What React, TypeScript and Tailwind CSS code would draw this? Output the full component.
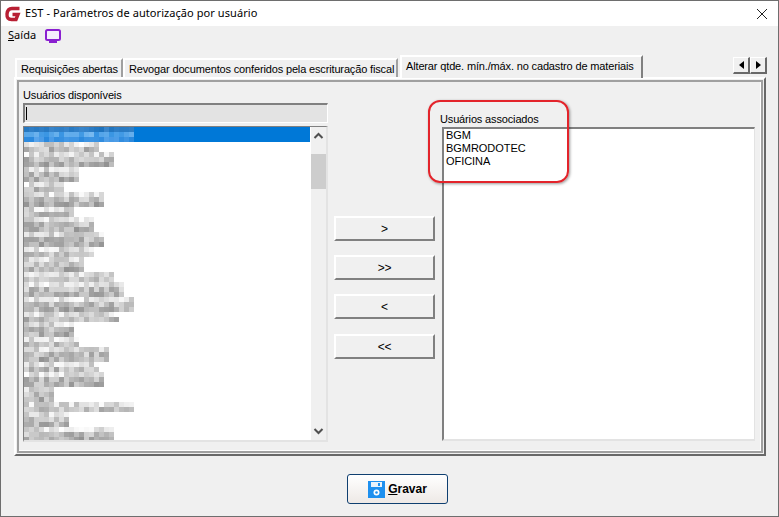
import React from "react";

const seq: [number, number][] = [
  [297,2],[342,3],[237,3],[192,2],[312,3],[222,2],[282,3],[312,3],[282,2],[252,3],[342,2],[372,3],[402,3],[357,2],[222,3],[237,2],[327,3],[297,2],[312,3],[162,3],[402,2],[207,3],[342,3],
];

function rnd(seed: number) {
  const x = Math.sin(seed * 127.1 + 3.7) * 43758.5453;
  return x - Math.floor(x);
}

function Mosaic() {
  const rects: React.ReactElement[] = [];
  let y = 15;
  let n = 0;
  seq.forEach(([w, rows], ri) => {
    for (let r = 0; r < rows; r++) {
      const cells = Math.round((w - 72) / 15);
      const base = r === 0 ? 222 : r === 1 ? 190 : 178;
      for (let c = 0; c < cells; c++) {
        n++;
        const g = Math.min(255, Math.round(base + (rnd(n + ri) - 0.5) * 66));
        rects.push(<rect key={n} x={c * 5} y={y} width={5} height={5} fill={`rgb(${g},${g},${g})`} />);
      }
      y += 5;
    }
  });
  for (let r = 0; r < 3; r++) {
    for (let c = 0; c < 22; c++) {
      n++;
      const t = rnd(n);
      const fill = r === 0 ? `rgb(${30 + t * 30},${115 + t * 20},${190 + t * 15})` : r === 1 ? `rgb(${50 + t * 70},${145 + t * 40},${225 + t * 15})` : `rgb(${40 + t * 50},${135 + t * 30},${220 + t * 15})`;
      rects.push(<rect key={n} x={c * 5} y={r * 5} width={5} height={5} fill={fill} />);
    }
  }
  return (
    <svg width="287" height="314" className="block">
      <rect x="0" y="0" width="287" height="15" fill="#0078d7" />
      {rects}
    </svg>
  );
}

function RaisedButton({ label, className }: { label: string; className?: string }) {
  return (
    <div className={"w-[101px] h-[25px] flex items-center justify-center border-t-2 border-l-2 border-t-white border-l-white border-r-2 border-b-2 border-r-[#808080] border-b-[#808080] bg-[#f0f0f0] text-[12px] text-black " + (className ?? "")}>
      {label}
    </div>
  );
}

function Tab({ label, active, w }: { label: string; active?: boolean; w: number }) {
  return (
    <div
      style={{ width: w }}
      className={
        active
          ? "relative z-10 bg-[#f0f0f0] h-[23px] -mt-[1px] border-t-2 border-l-2 border-t-white border-l-white border-r-2 border-r-[#808080] flex items-start pl-[4px] pt-[1px] whitespace-nowrap"
          : "h-[19px] mt-[2px] border-t-2 border-l-2 border-t-white border-l-white border-r-2 border-r-[#a0a0a0] flex items-start pl-[4px] pt-[1px] whitespace-nowrap"
      }
    >
      {label}
    </div>
  );
}

export default function App() {
  return (
    <div className="relative w-[779px] h-[517px] flex flex-col border border-[#6e6e6e] bg-[#f0f0f0] text-black overflow-hidden text-[11px] tracking-[-0.15px] font-['Liberation_Sans',sans-serif]">
      <div className="h-[25px] bg-white flex items-center pl-[3px] pr-[10px] shrink-0">
        <svg width="18" height="18" viewBox="0 0 18 18" className="shrink-0">
          <path d="M15.5 3.5H8Q3.5 3.5 3 9Q2.6 14.5 7.5 14.5H12L14 9.5H8.5" stroke="#b81f33" strokeWidth="3.4" fill="none" />
        </svg>
        <span className="ml-[3px] text-[11px] tracking-[0.07px] font-['Noto_Sans',sans-serif]">EST - Parâmetros de autorização por usuário</span>
        <svg width="12" height="12" viewBox="0 0 12 12" className="ml-auto">
          <path d="M1 1l10 10M11 1L1 11" stroke="#222" strokeWidth="1" fill="none" />
        </svg>
      </div>
      <div className="h-[20px] flex items-center pl-[7px] pb-[2px] shrink-0 tracking-[0.05px] font-['Noto_Sans',sans-serif]">
        <span><span className="underline">S</span>aída</span>
        <svg width="16" height="14" viewBox="0 0 16 14" className="ml-[9px] mt-[2px]">
          <rect x="1" y="1" width="14" height="10" rx="1.5" fill="#f4eefc" stroke="#8a1fd0" strokeWidth="2" />
          <rect x="4" y="12" width="8" height="2" fill="#8a1fd0" />
        </svg>
      </div>
      <div className="flex flex-col pl-[13px] pr-[12px] pt-[10px] shrink-0">
        <div className="relative flex h-[21px] pl-[1px]">
          <Tab label="Requisições abertas" w={108} />
          <Tab label="Revogar documentos conferidos pela escrituração fiscal" w={275} />
          <div className="w-[2px]" />
          <Tab label="Alterar qtde. mín./máx. no cadastro de materiais" active w={243} />
          <div className="ml-auto flex h-[17px] mt-[1px] mr-[-1px]">
            <div className="w-[17px] flex items-center justify-center border-t border-l border-t-white border-l-white border-r-2 border-b-2 border-r-[#696969] border-b-[#696969]">
              <div className="w-0 h-0 border-y-[4px] border-y-transparent border-r-[5px] border-r-black" />
            </div>
            <div className="w-[17px] flex items-center justify-center border-t border-l border-t-white border-l-white border-r-2 border-b-2 border-r-[#696969] border-b-[#696969]">
              <div className="w-0 h-0 border-y-[4px] border-y-transparent border-l-[5px] border-l-black" />
            </div>
          </div>
        </div>
        <div className="h-[379px] border-2 border-t-white border-l-white border-r-[#696969] border-b-[#696969] p-[1px]">
          <div className="h-full border-2 border-[#a0a0a0]">
            <div className="h-full flex border-r border-b border-r-white border-b-white pl-[4px] pt-[5px]">
              <div className="w-[305px] flex flex-col shrink-0">
                <div className="h-[15px] flex items-end leading-[13px]">Usuários disponíveis</div>
                <div className="h-[20px] mt-[1px] bg-[#e3e3e3] border-t-2 border-l-2 border-t-[#808080] border-l-[#808080] border-r border-b border-r-white border-b-white flex items-center pl-[1px]">
                  <div className="w-px h-[13px] bg-black" />
                </div>
                <div className="h-[316px] mt-[3px] flex bg-white border-t border-l border-t-[#808080] border-l-[#808080] border-r-2 border-b-2 border-r-[#e3e3e3] border-b-[#e3e3e3]">
                  <div className="w-[287px] overflow-hidden">
                    <Mosaic />
                  </div>
                  <div className="w-[15px] ml-[1px] bg-[#f0f0f0] flex flex-col items-center">
                    <svg width="15" height="18" viewBox="0 0 15 18" className="shrink-0">
                      <path d="M3.5 11L7.5 7l4 4" stroke="#505050" strokeWidth="2" fill="none" />
                    </svg>
                    <div className="w-[15px] h-[35px] mt-[9px] bg-[#cdcdcd]" />
                    <svg width="15" height="18" viewBox="0 0 15 18" className="mt-auto shrink-0">
                      <path d="M3.5 7l4 4 4-4" stroke="#505050" strokeWidth="2" fill="none" />
                    </svg>
                  </div>
                </div>
              </div>
              <div className="w-[114px] shrink-0 flex flex-col pt-[129px] pl-[6px]">
                <RaisedButton label=">" />
                <RaisedButton label=">>" className="mt-[14px]" />
                <RaisedButton label="<" className="mt-[14px]" />
                <RaisedButton label="<<" className="mt-[15px]" />
              </div>
              <div className="flex-1 flex flex-col pt-[26px] -ml-[2px] mr-[5px]">
                <div className="h-[15px] leading-[13px]">Usuários associados</div>
                <div className="h-[314px] ml-[2px] mt-[-1px] bg-white border-t-2 border-l-2 border-t-[#808080] border-l-[#808080] border-r border-b-2 border-r-[#e3e3e3] border-b-[#e3e3e3] pl-[2px] leading-[13px] tracking-[-0.05px]">
                  <div>BGM</div>
                  <div>BGMRODOTEC</div>
                  <div>OFICINA</div>
                </div>
              </div>
            </div>
          </div>
        </div>
      </div>
      <div className="flex justify-center flex-1 pt-[18px] pl-[16px]">
        <div className="w-[101px] h-[30px] flex items-center justify-center gap-[3px] rounded-[3px] border border-[#0f3f70] bg-gradient-to-b from-white to-[#eee9e6] font-bold text-[12px] tracking-normal">
          <svg width="17" height="17" viewBox="0 0 17 17">
            <path d="M0 0h17v17H0z" fill="#1e90ef" />
            <rect x="3" y="1" width="11" height="5" fill="#e8f2fb" />
            <rect x="10" y="2" width="2" height="3" fill="#1e90ef" />
            <circle cx="8.5" cy="11.5" r="3" fill="#fff" />
            <circle cx="8.5" cy="11.5" r="1.3" fill="#1e90ef" />
          </svg>
          <span><span className="underline">G</span>ravar</span>
        </div>
      </div>
      <div className="absolute left-[427px] top-[99px] w-[141px] h-[83px] rounded-[12px] border-2 border-[#e3242b] shadow-[1px_1px_3px_rgba(0,0,0,0.4)]" />
    </div>
  );
}
